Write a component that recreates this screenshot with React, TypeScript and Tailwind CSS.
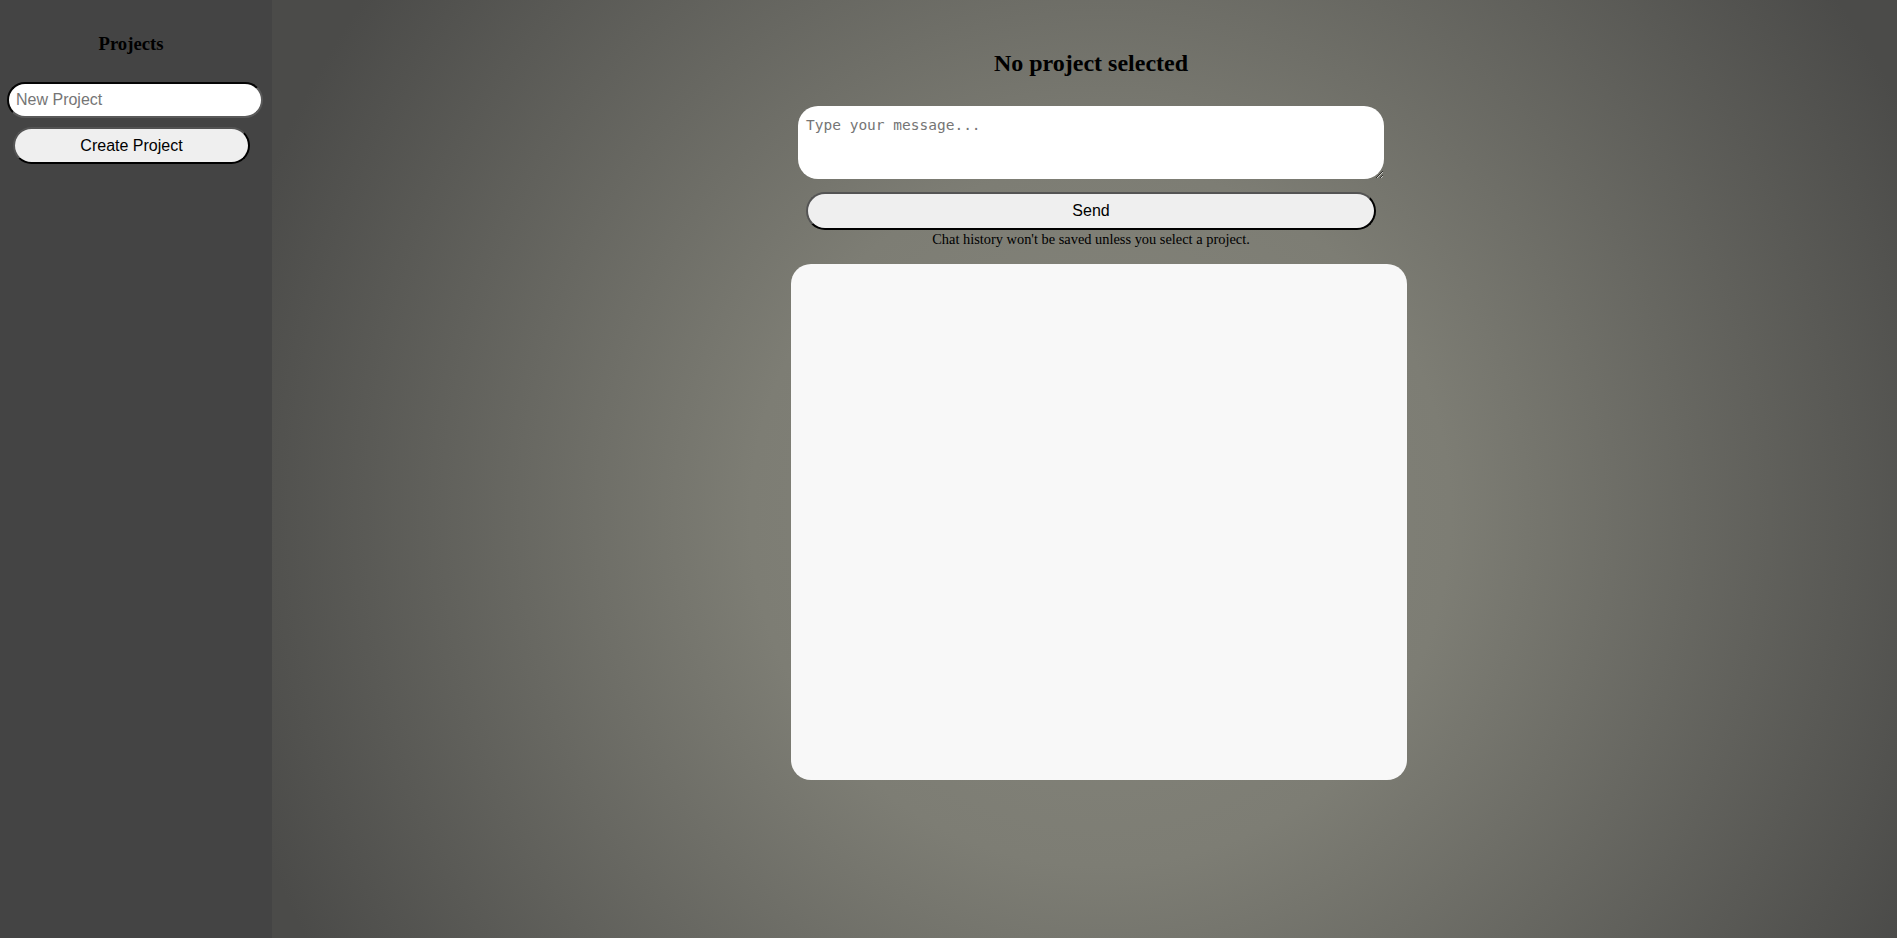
import React from 'react';

const App = () => {
  return (
    <div className="flex h-screen w-full overflow-hidden">
      {/* Sidebar */}
      <aside className="w-[272px] shrink-0 bg-[#444444]">
        <h3 className="mt-[33px] w-[262px] text-center font-['Liberation_Serif',serif] text-[18.72px] font-bold leading-[22px] text-black">
          Projects
        </h3>
        <input
          type="text"
          placeholder="New Project"
          className="ml-[7px] mt-[27px] block h-[36px] w-[256px] rounded-full border-2 border-[#5a5a5a] [border-style:inset] bg-white px-[7px] font-['Liberation_Sans',sans-serif] text-[16px] text-black placeholder:text-[#757575] outline-none"
        />
        <button className="ml-[13px] mt-[9px] block h-[37px] w-[237px] rounded-full border-2 border-black [border-style:outset] bg-[#efefef] font-['Liberation_Sans',sans-serif] text-[16px] text-black">
          Create Project
        </button>
      </aside>

      {/* Main */}
      <main className="flex flex-1 flex-col items-center pl-[13px] bg-[radial-gradient(circle_at_51%_55%,#86867c_0px,#7d7d74_350px,#4b4b49_900px)]">
        <h2 className="mt-[50px] font-['Liberation_Serif',serif] text-[24px] font-bold leading-[27px] text-black">
          No project selected
        </h2>
        <textarea
          placeholder="Type your message..."
          className="mt-[29px] block h-[73px] w-[586px] rounded-[20px] border-0 bg-white px-[8px] pt-[11px] font-['DejaVu_Sans_Mono',monospace] text-[14.5px] leading-[17px] text-black placeholder:text-[#757575] outline-none"
        />
        <button className="mt-[13px] block h-[38px] w-[570px] rounded-full border-2 border-black [border-style:outset] bg-[#efefef] font-['Liberation_Sans',sans-serif] text-[16px] text-black">
          Send
        </button>
        <p className="mt-[1px] font-['Liberation_Serif',serif] text-[14.4px] leading-[16px] text-black">
          Chat history won't be saved unless you select a project.
        </p>
        <div className="ml-[16px] mt-[17px] h-[516px] w-[616px] rounded-[20px] bg-[#f8f8f8]" />
      </main>
    </div>
  );
};

export default App;
